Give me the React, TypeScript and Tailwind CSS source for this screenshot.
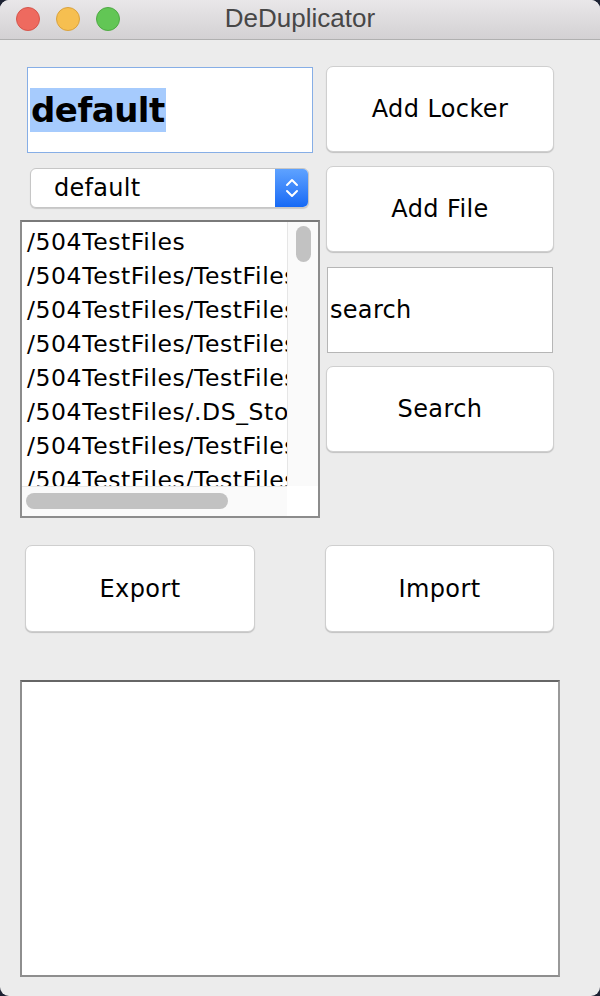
import React from "react";

const files = [
  "/504TestFiles",
  "/504TestFiles/TestFiles1/sample1.txt",
  "/504TestFiles/TestFiles1/sample2.txt",
  "/504TestFiles/TestFiles2/sample1.txt",
  "/504TestFiles/TestFiles2/sample2.txt",
  "/504TestFiles/.DS_Store",
  "/504TestFiles/TestFiles3/sample1.txt",
  "/504TestFiles/TestFiles3/sample2.txt",
];

const sans = "font-['DejaVu_Sans',sans-serif]";

function MacButton({ label, className }: { label: string; className?: string }) {
  return (
    <button
      className={`flex items-center justify-center bg-white border border-[#cfcfcf] rounded-[7px] shadow-[0_1px_1px_rgba(0,0,0,0.18)] text-[24px] tracking-[0.4px] text-black ${sans} ${className ?? ""}`}
    >
      {label}
    </button>
  );
}

function TitleBar() {
  return (
    <div className="h-[40px] shrink-0 grid grid-cols-[1fr_auto_1fr] items-center bg-gradient-to-b from-[#e9e7e9] to-[#d3d1d3] border-b border-[#b0b0b0]">
      <div className="flex items-center gap-[16px] pl-[16px] -mt-[2px]">
        <span className="w-[24px] h-[24px] rounded-full bg-[#ee6a5f] border border-[#d5554b]" />
        <span className="w-[24px] h-[24px] rounded-full bg-[#f6bf50] border border-[#d9a23d]" />
        <span className="w-[24px] h-[24px] rounded-full bg-[#62c655] border border-[#4fa944]" />
      </div>
      <div className="text-[26px] text-[#474747] font-['Liberation_Sans',sans-serif] -mt-[2px]">
        DeDuplicator
      </div>
      <div />
    </div>
  );
}

function Combo() {
  return (
    <div className="ml-[10px] mt-[15px] w-[279px] h-[40px] flex bg-white border border-[#c6c6c6] rounded-[6px] shadow-[0_1px_1px_rgba(0,0,0,0.15)] overflow-hidden">
      <div className={`flex-1 flex items-center pl-[23px] text-[24px] tracking-[0.3px] text-black ${sans}`}>default</div>
      <div className="w-[33px] flex items-center justify-center bg-gradient-to-b from-[#5ea2ff] to-[#1569f5]">
        <svg width="14" height="24" viewBox="0 0 14 24" fill="none" stroke="white" strokeWidth="2" strokeLinecap="round" strokeLinejoin="round">
          <path d="M2 9 L7 4 L12 9" />
          <path d="M2 15 L7 20 L12 15" />
        </svg>
      </div>
    </div>
  );
}

function FileList() {
  return (
    <div className="mt-[12px] w-[300px] h-[298px] border-2 border-[#8c8c8c] border-t-[#7a7a7a] bg-white grid grid-cols-[1fr_31px] grid-rows-[1fr_30px] overflow-hidden">
      <div className={`overflow-hidden pt-[3px] pl-[5px] text-[23.5px] tracking-[0.6px] text-black ${sans}`}>
        {files.map((f) => (
          <div key={f} className="h-[34px] leading-[34px] whitespace-nowrap">
            {f}
          </div>
        ))}
      </div>
      <div className="bg-[#fafafa] border-l border-[#e6e6e6] pt-[4px] pl-[8px]">
        <div className="w-[15px] h-[36px] rounded-full bg-[#c2c2c2]" />
      </div>
      <div className="bg-[#fafafa] border-t border-[#e6e6e6] pl-[4px] pt-[6px]">
        <div className="w-[202px] h-[16px] rounded-full bg-[#c2c2c2]" />
      </div>
      <div className="bg-white" />
    </div>
  );
}

export default function App() {
  return (
    <div className="min-h-screen bg-[#1d2233]">
      <div className="w-[600px] h-[996px] rounded-[9px] overflow-hidden bg-[#ececec] flex flex-col">
        <TitleBar />

        <div className="flex">
          <div className="ml-[20px] w-[300px] flex flex-col">
            <div className="ml-[7px] mt-[27px] w-[286px] h-[86px] bg-white border border-[#86aee6] flex items-center pl-[2px]">
              <span className={`bg-[#a6cbfd] h-[44px] leading-[44px] px-[1px] text-[34px] font-bold tracking-[-0.5px] text-black ${sans}`}>
                default
              </span>
            </div>
            <Combo />
            <FileList />
          </div>

          <div className="ml-[6px] w-[228px] flex flex-col">
            <MacButton label="Add Locker" className="mt-[26px] h-[86px]" />
            <MacButton label="Add File" className="mt-[14px] h-[86px]" />
            <div className={`ml-[1px] mt-[15px] w-[226px] h-[86px] bg-white border border-[#b6b6b6] flex items-center pl-[2px] text-[24px] tracking-[0.3px] text-black ${sans}`}>
              search
            </div>
            <MacButton label="Search" className="mt-[13px] h-[86px]" />
          </div>
        </div>

        <div className="flex mt-[27px]">
          <MacButton label="Export" className="ml-[25px] w-[230px] h-[87px]" />
          <MacButton label="Import" className="ml-[70px] w-[229px] h-[87px]" />
        </div>

        <div className="ml-[20px] mt-[48px] w-[540px] h-[297px] bg-white border-2 border-[#8e8e8e] border-t-[#666666] border-r-[#999999]" />
      </div>
    </div>
  );
}
